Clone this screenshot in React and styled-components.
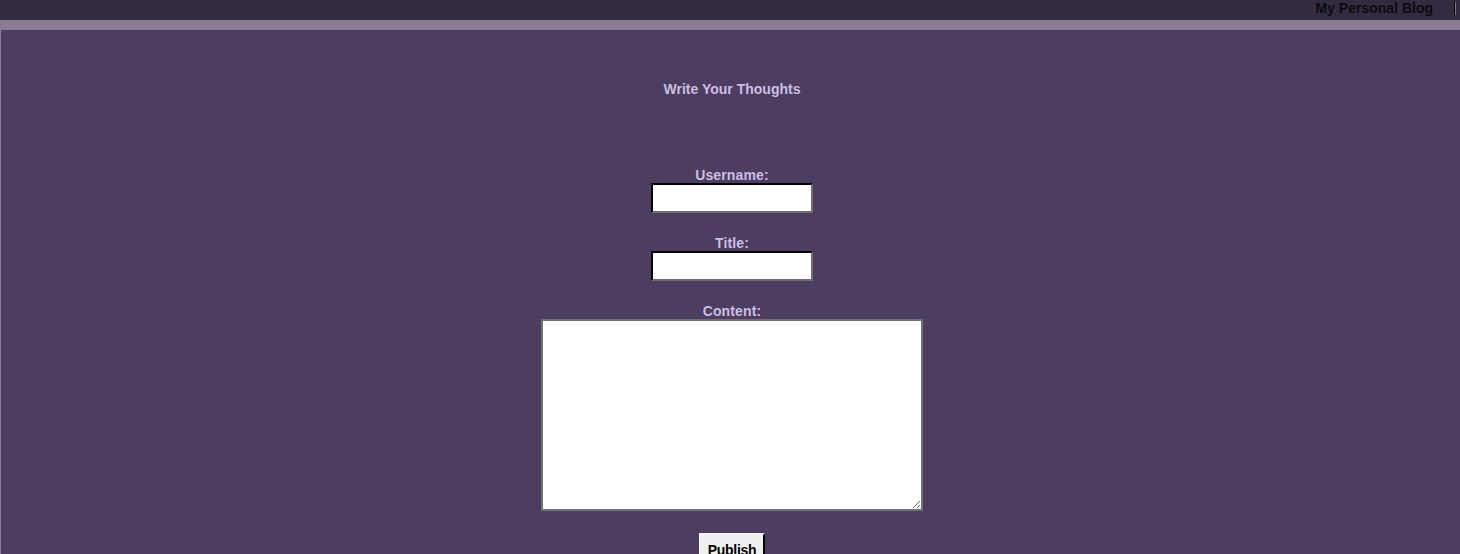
import React, { useState } from 'react';
import styled, { createGlobalStyle } from 'styled-components';

const GlobalStyle = createGlobalStyle`
  html, body {
    margin: 0;
    padding: 0;
    background: #8b7a96;
    font-family: "Liberation Sans", Arial, sans-serif;
  }
`;

const App = () => {
  const [username, setUsername] = useState('');
  const [title, setTitle] = useState('');
  const [content, setContent] = useState('');

  return (
    <>
      <GlobalStyle />
      <Header>
        <BlogName>My Personal Blog</BlogName>
        <MenuBar />
      </Header>
      <Main>
        <Heading>Write Your Thoughts</Heading>
        <Form onSubmit={e => e.preventDefault()}>
          <Field>
            <Label htmlFor="username">Username:</Label>
            <Input id="username" value={username} onChange={e => setUsername(e.target.value)} />
          </Field>
          <Field>
            <Label htmlFor="title">Title:</Label>
            <Input id="title" value={title} onChange={e => setTitle(e.target.value)} />
          </Field>
          <Field>
            <Label htmlFor="content">Content:</Label>
            <TextArea id="content" value={content} onChange={e => setContent(e.target.value)} />
          </Field>
          <PublishButton type="submit">Publish</PublishButton>
        </Form>
      </Main>
    </>
  );
};

const Header = styled.header`
  display: flex;
  align-items: center;
  justify-content: flex-end;
  height: 20px;
  background: #332c40;
  padding-right: 4px;
`
const BlogName = styled.span`
  color: #0d0a12;
  font-weight: bold;
  font-size: 14px;
  line-height: 16px;
  margin-top: -4px;
`
const MenuBar = styled.span`
  width: 0;
  height: 13px;
  margin: -4px 0 0 21px;
  border-left: 1px solid #000;
  border-right: 1px solid #7a7a7a;
`
const Main = styled.main`
  margin: 10px 0 0 1px;
  min-height: 524px;
  background: #4d3d61;
  padding: 51px 0 0 3px;
  display: flex;
  flex-direction: column;
  align-items: center;
`
const Heading = styled.h2`
  margin: 0;
  color: #cbbfe2;
  font-size: 14px;
  line-height: 16px;
`
const Form = styled.form`
  margin-top: 70px;
  display: flex;
  flex-direction: column;
  align-items: center;
`
const Field = styled.div`
  display: flex;
  flex-direction: column;
  align-items: center;
  margin-bottom: 22px;
`
const Label = styled.label`
  color: #cbbfe2;
  font-weight: bold;
  font-size: 14px;
  letter-spacing: 0.15px;
  line-height: 16px;
`
const Input = styled.input`
  box-sizing: border-box;
  width: 162px;
  height: 30px;
  background: #fff;
  border: 2px inset #767676;
  border-top-color: #1e1e1e;
  border-left-color: #1e1e1e;
  border-right-color: #6e6e6e;
  border-bottom-color: #6e6e6e;
  padding: 2px 4px;
`
const TextArea = styled.textarea`
  box-sizing: border-box;
  width: 382px;
  height: 192px;
  background: #fff;
  border: 2px solid #707070;
  padding: 2px;
`
const PublishButton = styled.button`
  box-sizing: border-box;
  width: 66px;
  height: 30px;
  background: #efefef;
  color: #000;
  font-family: "Liberation Sans", Arial, sans-serif;
  font-weight: bold;
  font-size: 14px;
  letter-spacing: -0.3px;
  border: 2px outset #767676;
  border-top-color: #f5f5f5;
  border-left-color: #f5f5f5;
  border-right-color: #1e1e1e;
  border-bottom-color: #1e1e1e;
  padding: 3px 0 0;
  line-height: 16px;
  align-self: center;
`

export default App;
